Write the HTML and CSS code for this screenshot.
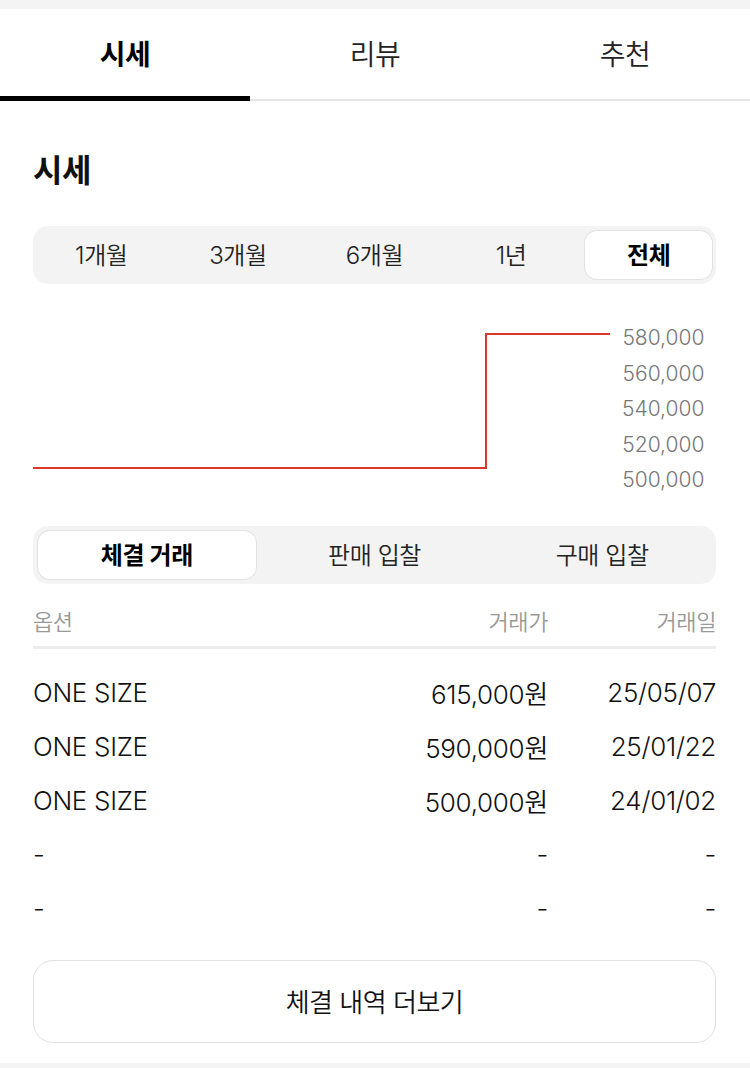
FILE: index.html
```html
<!DOCTYPE html>
<html lang="ko">
<head>
<meta charset="utf-8">
<link rel="stylesheet" href="styles.css">
</head>
<body>
<div class="topstrip"></div>
<nav class="tabs">
  <div class="tab active">시세</div>
  <div class="tab">리뷰</div>
  <div class="tab">추천</div>
</nav>
<section class="content">
  <h2 class="title">시세</h2>
  <div class="seg period">
    <div class="seg-item">1개월</div>
    <div class="seg-item">3개월</div>
    <div class="seg-item">6개월</div>
    <div class="seg-item">1년</div>
    <div class="seg-item on">전체</div>
  </div>
  <div class="chart">
    <svg class="plot" width="580" height="190" viewBox="0 0 580 190">
      <polyline points="0,166 453,166 453,32 577,32" fill="none" stroke="#d8392c" stroke-width="2"/>
    </svg>
    <div class="axis">
      <span>580,000</span>
      <span>560,000</span>
      <span>540,000</span>
      <span>520,000</span>
      <span>500,000</span>
    </div>
  </div>
  <div class="seg trade">
    <div class="seg-item on">체결 거래</div>
    <div class="seg-item">판매 입찰</div>
    <div class="seg-item">구매 입찰</div>
  </div>
  <div class="table">
    <div class="row head">
      <span class="c1">옵션</span><span class="c2">거래가</span><span class="c3">거래일</span>
    </div>
    <div class="row"><span class="c1">ONE SIZE</span><span class="c2">615,000원</span><span class="c3">25/05/07</span></div>
    <div class="row"><span class="c1">ONE SIZE</span><span class="c2">590,000원</span><span class="c3">25/01/22</span></div>
    <div class="row"><span class="c1">ONE SIZE</span><span class="c2">500,000원</span><span class="c3">24/01/02</span></div>
    <div class="row"><span class="c1">-</span><span class="c2">-</span><span class="c3">-</span></div>
    <div class="row"><span class="c1">-</span><span class="c2">-</span><span class="c3">-</span></div>
  </div>
  <button class="more">체결 내역 더보기</button>
</section>
<div class="bottomstrip"></div>
</body>
</html>
```
FILE: styles.css
```css
* { box-sizing: border-box; }
html, body { margin: 0; padding: 0; background: #fff; }
body {
  font-family: "Inter", "Noto Sans CJK KR", "Noto Sans", sans-serif;
  font-weight: 350;
  color: #111;
  width: 750px;
  overflow: hidden;
}
.topstrip { height: 9px; background: #f4f4f4; }
.tabs {
  display: flex;
  height: 92px;
  border-bottom: 2px solid #e6e6e6;
}
.tab {
  flex: 1;
  display: flex;
  align-items: center;
  justify-content: center;
  font-size: 28px;
  color: #222;
  letter-spacing: -0.5px;
  position: relative;
  padding-bottom: 2px;
}
.tab.active { font-weight: 700; color: #000; }
.tab.active::after {
  content: "";
  position: absolute;
  left: 0; right: 0; bottom: -2px;
  height: 5px;
  background: #000;
}
.content { padding: 0 34px 0 33px; }
.title {
  margin: 0;
  padding-top: 48px;
  height: 125px;
  font-size: 32px;
  font-weight: 700;
  letter-spacing: -0.5px;
  line-height: 44px;
}
.seg {
  display: grid;
  background: #f3f3f3;
  border-radius: 15px;
  padding: 5px 0;
  height: 58px;
}
.period { grid-template-columns: repeat(5, 1fr); }
.trade { grid-template-columns: repeat(3, 1fr); }
.seg-item {
  display: flex;
  align-items: center;
  justify-content: center;
  font-size: 24px;
  color: #222;
  border-radius: 12px;
  letter-spacing: -0.4px;
  padding-bottom: 3px;
}
.seg-item.on {
  background: #fff;
  font-weight: 700;
  color: #000;
  box-shadow: 0 0 0 1px #e2e2e2;
}
.period .seg-item.on { margin: 0 4px 0 6px; }
.trade .seg-item.on { margin: 0 5px; }
.chart {
  display: flex;
  height: 242px;
  padding-top: 18px;
}
.plot { display: block; }
.axis {
  display: flex;
  flex-direction: column;
  margin-left: 9px;
  padding-top: 18px;
}
.axis span {
  font-size: 21px;
  color: #777;
  height: 35.6px;
  line-height: 35.6px;
  text-align: right;
}
.table { margin-top: 20px; }
.row {
  display: flex;
  align-items: center;
  height: 54px;
  font-size: 26px;
  letter-spacing: -0.3px;
  color: #111;
}
.row.head {
  height: 45px;
  font-size: 22px;
  letter-spacing: -0.4px;
  color: #999;
  border-bottom: 3px solid #ececec;
  margin-bottom: 16px;
  align-items: flex-start;
}
.c1 { flex: 1; }
.c2 { width: 200px; text-align: right; }
.c3 { width: 168px; text-align: right; }
.more {
  display: block;
  width: 100%;
  height: 83px;
  margin-top: 25px;
  padding-bottom: 4px;
  background: #fff;
  border: 1.5px solid #e1e1e1;
  border-radius: 20px;
  font-family: inherit;
  font-weight: 350;
  font-size: 26px;
  color: #111;
  letter-spacing: -0.5px;
}
.bottomstrip { height: 30px; background: #f4f4f4; margin-top: 20px; }
```
